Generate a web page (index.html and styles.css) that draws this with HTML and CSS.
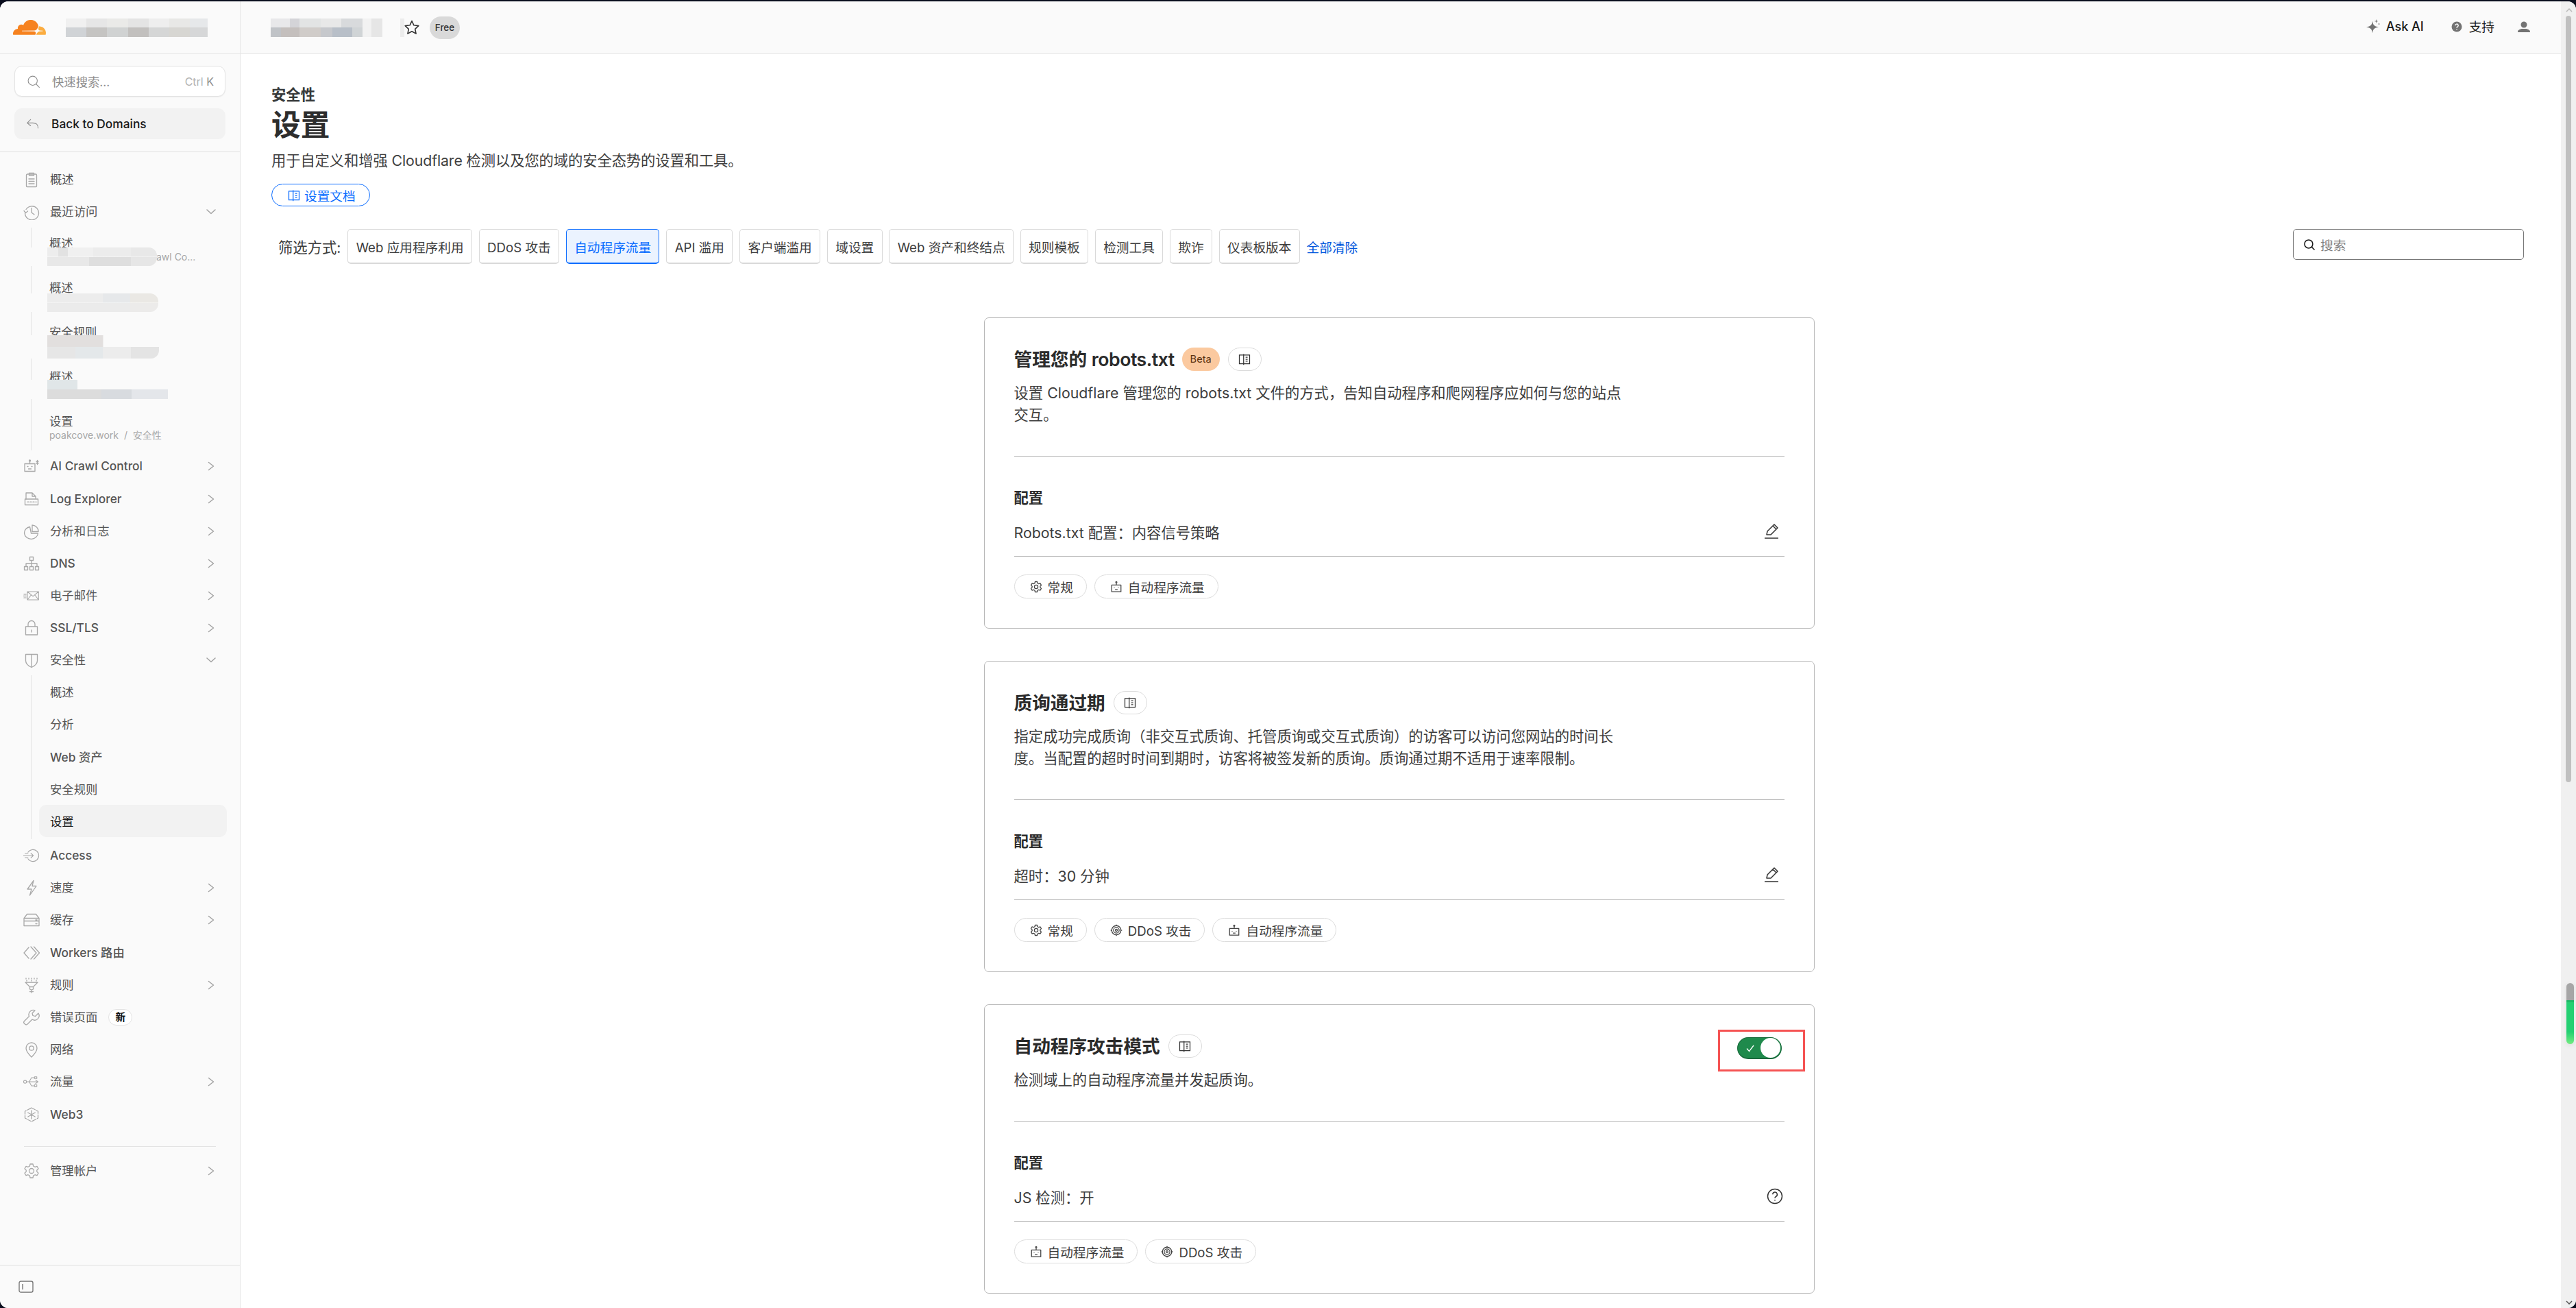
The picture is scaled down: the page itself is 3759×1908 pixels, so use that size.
FILE: index.html
```html
<!DOCTYPE html>
<html lang="zh-CN">
<head>
<meta charset="utf-8">
<title>设置</title>
<link rel="stylesheet" href="styles.css">
</head>
<body>
<svg class="defs" aria-hidden="true">
  <defs>
    <symbol id="i-clip" viewBox="0 0 24 24"><path d="M6 4h12a1.500 1.500 0 0 1 1.500 1.500v16a1 1 0 0 1-1 1h-13a1 1 0 0 1-1-1v-16A1.500 1.500 0 0 1 6 4z"/><path d="M8.500 2.500h7V6h-7zM8 11h8M8 14.500h8M8 18h8"/></symbol>
    <symbol id="i-hist" viewBox="0 0 24 24"><path d="M4 8.500A10 10 0 1 1 2.500 14"/><path d="M1 10.500l2.500 3 3-2.500M12 6.500V13l4 3"/></symbol>
    <symbol id="i-bot" viewBox="0 0 24 24"><path d="M2 8.500h15v11H2zM9.500 8.500V4.500"/><circle cx="9.500" cy="4" r="1"/><path d="M6 12.500h1M12 12.500h1M7.500 16h4M19 5l3 3M22 5l-3 3M20.500 3.500v6"/></symbol>
    <symbol id="i-log" viewBox="0 0 24 24"><path d="M4 12V3h9l5 5v3M13 3v5h5"/><path d="M2.500 12h19v8.500h-19z"/><path d="M6 16.200h2M10 16.200h2M14 16.200h2M18 16.200h1"/></symbol>
    <symbol id="i-pie" viewBox="0 0 24 24"><path d="M9.500 5.500a10 9 0 1 0 12 9.500H11.500z"/><path d="M13 3a9.500 9 0 0 1 9 9.500H13z"/></symbol>
    <symbol id="i-dns" viewBox="0 0 24 24"><path d="M9.500 2.500h5v5h-5zM1.500 16.500h5v5h-5zM9.500 16.500h5v5h-5zM17.500 16.500h5v5h-5zM12 7.500v9M4 16.500V12h16v4.500"/></symbol>
    <symbol id="i-mail" viewBox="0 0 28 24"><path d="M7 5h19v14H7zM7 5l9.500 8L26 5M7 19l6.500-8.500M26 19l-6.500-8.500M1 9.500h4M0 12.500h5M1 15.500h4"/></symbol>
    <symbol id="i-lock" viewBox="0 0 24 24"><path d="M3.500 10h17v12h-17zM7 10V6.500a5 5 0 0 1 10 0V10M12 15v3"/></symbol>
    <symbol id="i-shield" viewBox="0 0 24 24"><path d="M3.500 3.500h17v9c0 5-4 8-8.500 10-4.500-2-8.500-5-8.500-10zM12 3.500v19"/></symbol>
    <symbol id="i-access" viewBox="0 0 28 24"><path d="M8 6.500a10 10 0 1 1 0 11M0 12h17M13 8l4 4-4 4M3 8.500h5M3 15.500h5"/></symbol>
    <symbol id="i-bolt" viewBox="0 0 24 24"><path d="M15 1.500L6 14h6l-2.500 9L19 9.500h-6z"/></symbol>
    <symbol id="i-cache" viewBox="0 0 24 24"><path d="M5.500 3.500h13L23 9.500v4H1v-4zM1 9.500h22M1 14v6.500h22V14M18 12h2M18 17.500h2"/></symbol>
    <symbol id="i-work" viewBox="0 0 24 24"><path d="M8 4L1 12l7 8M11 3l8 9-8 9M15.500 3l8 9-8 9"/></symbol>
    <symbol id="i-rules" viewBox="0 0 24 24"><path d="M3 8h18l-6.500 6.500H9.500zM9.500 14.500V18l2.500 1 2.500-1v-3.500M12 19v4M9.500 21.500h5M4 2v1M8 2v1M12 2v1M16 2v1M20 2v1M5 5v1M12 5v1M19 5v1" /></symbol>
    <symbol id="i-wrench" viewBox="0 0 24 24"><path d="M22 6l-4.500 4.500L14 9.500l-1-3.500L17 2a6.500 6.500 0 0 0-8.500 8.500L1.500 17.500a2.500 2.500 0 0 0 0 3.500l1 1a2.500 2.500 0 0 0 3.500 0l7-7A6.500 6.500 0 0 0 22 6z"/></symbol>
    <symbol id="i-pin" viewBox="0 0 24 24"><path d="M12 23c-5-5-8-9-8-13a8 8 0 0 1 16 0c0 4-3 8-8 13z"/><circle cx="12" cy="10" r="3.200"/></symbol>
    <symbol id="i-usb" viewBox="0 0 28 24"><circle cx="3" cy="12" r="2.500"/><path d="M5.500 12H24M21 9l4 3-4 3M10 12l4-7h5M10 12l4 7h5"/><path d="M19 3.500h4v3h-4zM19 17h4v3h-4z"/></symbol>
    <symbol id="i-web3" viewBox="0 0 24 24"><path d="M12 2l9.500 5v10L12 22 2.500 17V7z" stroke-dasharray="6 2"/><path d="M12 6v12M6.800 9l10.400 6M17.200 9L6.800 15"/></symbol>
    <symbol id="i-gear" viewBox="0 0 24 24"><path d="M10 2h4l.7 3 2.300 1.300 3-1 2 3.500-2.200 2.100v2.200l2.200 2.100-2 3.500-3-1L14.700 19 14 22h-4l-.7-3L7 17.700l-3 1-2-3.500 2.200-2.100v-2.200L2 8.800l2-3.500 3 1L9.300 5z"/><circle cx="12" cy="12" r="3.500"/></symbol>
    <symbol id="i-book" viewBox="0 0 24 24"><path d="M3 4.500h7.500v15.500H3zM10.500 4.500H21V20H10.500M10.500 3v19M14 8.500h3.500M14 12h3.500M14 15.500h3.500"/></symbol>
    <symbol id="i-search" viewBox="0 0 24 24"><circle cx="10.500" cy="10.500" r="8"/><path d="M16.500 16.500L22 22"/></symbol>
    <symbol id="i-bottag" viewBox="0 0 24 24"><path d="M3 8.500h18v13H3zM12 8.500V4"/><circle cx="12" cy="3" r="1.200"/><path d="M8 13.500v1M16 13.500v1M9.500 17.500h5"/></symbol>
    <symbol id="i-target" viewBox="0 0 24 24"><circle cx="12" cy="12" r="9"/><circle cx="12" cy="12" r="5.500"/><circle cx="12" cy="12" r="2"/><path d="M12 1v3M12 20v3M1 12h3M20 12h3"/></symbol>
    <symbol id="i-pencil" viewBox="0 0 24 24"><path d="M5 17l1-5L16 2l5 5-10 10zM14 4l5 5M2 22h20"/></symbol>
    <symbol id="i-help" viewBox="0 0 24 24"><circle cx="12" cy="12" r="10.500"/><path d="M8.800 9.300a3.300 3.300 0 1 1 4.800 3c-1 .6-1.600 1.200-1.600 2.500M12 17v1.500"/></symbol>
    <symbol id="i-right" viewBox="0 0 14 14"><path d="M3.500 1.500L10.500 7l-7 5.500"/></symbol>
    <symbol id="i-down" viewBox="0 0 14 14"><path d="M1 4l6 5.500L13 4"/></symbol>
  </defs>
</svg>
<div class="app">
  <aside class="sidebar">
    <div class="brand">
      <svg class="logo" viewBox="0 6.700 24 10.800" aria-hidden="true">
        <path class="logo-a" d="M16.509 16.845c.147-.507.091-.971-.155-1.316-.225-.316-.605-.499-1.062-.52l-8.659-.112a.156.156 0 0 1-.133-.071c-.028-.042-.035-.099-.021-.155.028-.084.112-.148.204-.156l8.736-.112c1.035-.049 2.16-.887 2.553-1.914l.499-1.301c.022-.056.029-.113.015-.168-.562-2.546-2.835-4.445-5.55-4.445-2.504 0-4.628 1.617-5.387 3.861-.493-.366-1.119-.562-1.794-.499-1.203.119-2.167 1.083-2.286 2.286-.028.31-.007.612.064.894C1.568 13.171 0 14.775 0 16.752c0 .175.014.351.035.527.014.083.084.148.169.148h15.981c.091 0 .176-.065.203-.155z"/>
        <path class="logo-b" d="M19.266 11.281c-.077 0-.161 0-.238.011-.057 0-.106.042-.127.098l-.338 1.174c-.148.507-.092.971.154 1.317.226.316.606.498 1.063.519l1.844.113c.055 0 .105.027.132.071.029.043.035.107.022.156-.029.084-.114.148-.205.155l-1.921.112c-1.041.049-2.158.887-2.553 1.914l-.14.359c-.029.071.021.141.098.141h6.598c.077 0 .147-.049.169-.126.112-.408.176-.837.176-1.28 0-2.603-2.125-4.727-4.734-4.727"/>
      </svg>
      <div class="mosaic mosaic-brand"></div>
    </div>
    <div class="tools">
      <div class="quick">
        <svg class="ico ico-quick"><use href="#i-search"/></svg>
        <span class="quick-text">快速搜索...</span>
        <span class="kbd">Ctrl <b>K</b></span>
      </div>
      <div class="back">
        <svg class="ico ico-back" viewBox="0 0 24 24"><path d="M8 4L2 10l6 5M2 10h10c6 0 9 3 9 9"/></svg>
        <span>Back to Domains</span>
      </div>
    </div>
    <nav class="nav">
      <a class="row"><svg class="ico"><use href="#i-clip"/></svg><span>概述</span></a>
      <a class="row"><svg class="ico"><use href="#i-hist"/></svg><span>最近访问</span><svg class="chev chev-down"><use href="#i-down"/></svg></a>
      <div class="recents">
        <div class="recent"><div class="r-label">概述</div><div class="r-sub r-sub-clip">awl Co...</div><div class="mosaic mosaic-r1"></div></div>
        <div class="recent"><div class="r-label">概述</div><div class="mosaic mosaic-r2"></div></div>
        <div class="recent"><div class="r-label">安全规则</div><div class="mosaic mosaic-r3"></div></div>
        <div class="recent"><div class="r-label">概述</div><div class="mosaic mosaic-r4"></div></div>
        <div class="recent"><div class="r-label">设置</div><div class="r-sub">poakcove.work&nbsp;&nbsp;/&nbsp;&nbsp;安全性</div></div>
      </div>
      <a class="row"><svg class="ico"><use href="#i-bot"/></svg><span class="en">AI Crawl Control</span><svg class="chev"><use href="#i-right"/></svg></a>
      <a class="row"><svg class="ico"><use href="#i-log"/></svg><span class="en">Log Explorer</span><svg class="chev"><use href="#i-right"/></svg></a>
      <a class="row"><svg class="ico"><use href="#i-pie"/></svg><span>分析和日志</span><svg class="chev"><use href="#i-right"/></svg></a>
      <a class="row"><svg class="ico"><use href="#i-dns"/></svg><span class="en">DNS</span><svg class="chev"><use href="#i-right"/></svg></a>
      <a class="row"><svg class="ico"><use href="#i-mail"/></svg><span>电子邮件</span><svg class="chev"><use href="#i-right"/></svg></a>
      <a class="row"><svg class="ico"><use href="#i-lock"/></svg><span class="en">SSL/TLS</span><svg class="chev"><use href="#i-right"/></svg></a>
      <a class="row"><svg class="ico"><use href="#i-shield"/></svg><span>安全性</span><svg class="chev chev-down"><use href="#i-down"/></svg></a>
      <div class="subnav">
        <a class="sub">概述</a>
        <a class="sub">分析</a>
        <a class="sub en">Web 资产</a>
        <a class="sub">安全规则</a>
        <a class="sub sub-on">设置</a>
      </div>
      <a class="row"><svg class="ico"><use href="#i-access"/></svg><span class="en">Access</span></a>
      <a class="row"><svg class="ico"><use href="#i-bolt"/></svg><span>速度</span><svg class="chev"><use href="#i-right"/></svg></a>
      <a class="row"><svg class="ico"><use href="#i-cache"/></svg><span>缓存</span><svg class="chev"><use href="#i-right"/></svg></a>
      <a class="row"><svg class="ico"><use href="#i-work"/></svg><span class="en">Workers 路由</span></a>
      <a class="row"><svg class="ico"><use href="#i-rules"/></svg><span>规则</span><svg class="chev"><use href="#i-right"/></svg></a>
      <a class="row"><svg class="ico"><use href="#i-wrench"/></svg><span>错误页面</span><em class="new">新</em></a>
      <a class="row"><svg class="ico"><use href="#i-pin"/></svg><span>网络</span></a>
      <a class="row"><svg class="ico"><use href="#i-usb"/></svg><span>流量</span><svg class="chev"><use href="#i-right"/></svg></a>
      <a class="row"><svg class="ico"><use href="#i-web3"/></svg><span class="en">Web3</span></a>
      <div class="nav-rule"></div>
      <a class="row"><svg class="ico"><use href="#i-gear"/></svg><span>管理帐户</span><svg class="chev"><use href="#i-right"/></svg></a>
    </nav>
    <div class="side-foot">
      <svg class="panel" viewBox="0 0 22 18"><rect x="1" y="1" width="20" height="16" rx="2.500"/><path d="M6 5v8"/></svg>
    </div>
  </aside>

  <main class="main">
    <header class="topbar">
      <div class="mosaic mosaic-top"></div>
      <svg class="star" viewBox="0 0 24 24"><path d="M12 2.500l2.900 6.300 6.900.8-5.100 4.700 1.400 6.800-6.100-3.400-6.100 3.400 1.400-6.800L2.200 9.600l6.900-.8z"/></svg>
      <span class="free">Free</span>
      <div class="top-right">
        <span class="top-item"><svg class="top-ico" viewBox="0 0 20 21"><path d="M9 2.500c.8 6 2.500 7.700 9 9-6.500 1.300-8.200 3-9 9-.8-6-2.500-7.700-9-9 6.500-1.300 8.200-3 9-9z"/><path d="M14.500 0l.6 2.400 2.400.6-2.400.6-.6 2.400-.6-2.400-2.400-.6 2.400-.6zM18.500 5.500l.4 1.100 1.100.4-1.100.4-.4 1.100-.4-1.100-1.100-.4 1.100-.4z"/></svg><b>Ask AI</b></span>
        <span class="top-item top-help"><svg class="top-ico-s" viewBox="0 0 16 16"><circle cx="8" cy="8" r="7.500"/><path class="qm" d="M5.800 6.300a2.200 2.200 0 1 1 3.300 1.900c-.7.400-1.100.8-1.100 1.600M8 11.200v1.200"/></svg><span class="help-text">支持</span></span>
        <svg class="user" viewBox="0 0 18 16"><circle cx="9" cy="5" r="4.500"/><path d="M0 16c0-3 2-4 5.500-5h7c3.500 1 5.500 2 5.500 5z"/></svg>
      </div>
    </header>
    <div class="content">
      <div class="eyebrow">安全性</div>
      <h1 class="title">设置</h1>
      <p class="lead">用于自定义和增强 Cloudflare 检测以及您的域的安全态势的设置和工具。</p>
      <a class="doc"><svg class="doc-ico"><use href="#i-book"/></svg>设置文档</a>
      <div class="filters">
        <span class="f-label">筛选方式:</span>
        <button class="f-btn">Web 应用程序利用</button>
        <button class="f-btn">DDoS 攻击</button>
        <button class="f-btn f-on">自动程序流量</button>
        <button class="f-btn">API 滥用</button>
        <button class="f-btn">客户端滥用</button>
        <button class="f-btn">域设置</button>
        <button class="f-btn">Web 资产和终结点</button>
        <button class="f-btn">规则模板</button>
        <button class="f-btn">检测工具</button>
        <button class="f-btn">欺诈</button>
        <button class="f-btn">仪表板版本</button>
        <a class="f-clear">全部清除</a>
        <div class="f-search"><svg class="f-search-ico"><use href="#i-search"/></svg><span>搜索</span></div>
      </div>
      <div class="cards">
        <section class="card">
          <div class="card-head"><h2>管理您的 <span class="h2-en">robots.txt</span></h2><span class="beta">Beta</span><span class="book"><svg><use href="#i-book"/></svg></span></div>
          <p class="card-desc">设置 Cloudflare 管理您的 robots.txt 文件的方式，告知自动程序和爬网程序应如何与您的站点交互。</p>
          <hr class="rule rule-top">
          <h3>配置</h3>
          <div class="cfg"><span>Robots.txt 配置：内容信号策略</span><svg class="cfg-ico"><use href="#i-pencil"/></svg></div>
          <hr class="rule">
          <div class="tags">
            <span class="tag"><svg><use href="#i-gear"/></svg>常规</span>
            <span class="tag"><svg><use href="#i-bottag"/></svg>自动程序流量</span>
          </div>
        </section>
        <section class="card">
          <div class="card-head"><h2>质询通过期</h2><span class="book"><svg><use href="#i-book"/></svg></span></div>
          <p class="card-desc">指定成功完成质询（非交互式质询、托管质询或交互式质询）的访客可以访问您网站的时间长度。当配置的超时时间到期时，访客将被签发新的质询。质询通过期不适用于速率限制。</p>
          <hr class="rule rule-top">
          <h3>配置</h3>
          <div class="cfg"><span>超时：30 分钟</span><svg class="cfg-ico"><use href="#i-pencil"/></svg></div>
          <hr class="rule">
          <div class="tags">
            <span class="tag"><svg><use href="#i-gear"/></svg>常规</span>
            <span class="tag"><svg><use href="#i-target"/></svg>DDoS 攻击</span>
            <span class="tag"><svg><use href="#i-bottag"/></svg>自动程序流量</span>
          </div>
        </section>
        <section class="card">
          <div class="card-head"><h2>自动程序攻击模式</h2><span class="book"><svg><use href="#i-book"/></svg></span>
            <div class="switch-wrap"><div class="switch"><svg viewBox="0 0 14 14"><path d="M2 7.500l3.500 4L12 3"/></svg><i></i></div></div>
          </div>
          <p class="card-desc">检测域上的自动程序流量并发起质询。</p>
          <hr class="rule rule-top">
          <h3>配置</h3>
          <div class="cfg"><span>JS 检测：开</span><svg class="cfg-ico cfg-ico-help"><use href="#i-help"/></svg></div>
          <hr class="rule">
          <div class="tags">
            <span class="tag"><svg><use href="#i-bottag"/></svg>自动程序流量</span>
            <span class="tag"><svg><use href="#i-target"/></svg>DDoS 攻击</span>
          </div>
        </section>
      </div>
    </div>
  </main>

  <div class="scrollbar">
    <svg class="sb-arrow" viewBox="0 0 10 6"><path d="M1 5l4-4 4 4"/></svg>
    <div class="sb-thumb"></div>
    <div class="sb-blob"></div>
    <svg class="sb-arrow sb-arrow-down" viewBox="0 0 10 6"><path d="M1 1l4 4 4-4"/></svg>
  </div>
</div>
</body>
</html>
```

FILE: styles.css
```css
* { box-sizing: border-box; }
html, body { margin: 0; height: 100%; }
body {
  background: #0a0e1e;
  font-family: Inter, "Noto Sans CJK SC", sans-serif;
  color: #333;
  overflow: hidden;
}
.defs { position: absolute; width: 0; height: 0; }
.app {
  display: flex;
  height: 1906px;
  margin-top: 2px;
  background: #fff;
  border-radius: 12px;
  overflow: hidden;
}

/* sidebar */
.sidebar {
  width: 351px;
  flex: none;
  display: flex;
  flex-direction: column;
  background: #fafafa;
  border-right: 1px solid #e5e5e5;
}
.brand {
  height: 77px;
  flex: none;
  display: flex;
  align-items: center;
  gap: 29px;
  padding-left: 19px;
  border-bottom: 1px solid #e5e5e5;
}
.logo { width: 48px; height: 22px; }
.logo-a { fill: #f6821f; }
.logo-b { fill: #fbad41; }
.tools {
  flex: none;
  display: flex;
  flex-direction: column;
  gap: 17px;
  padding: 17px 21px 18px;
  border-bottom: 1px solid #e0e0e0;
}
.ico {
  width: 24px;
  height: 24px;
  flex: none;
  fill: none;
  stroke: #a8a8a8;
  stroke-width: 1.300;
  stroke-linejoin: round;
  stroke-linecap: round;
}
.quick, .back {
  height: 45px;
  display: flex;
  align-items: center;
  padding: 0 16px;
  border-radius: 11px;
  font-size: 17.330px;
}
.quick { background: #fff; border: 1px solid #e3e3e3; color: #8c8c8c; box-shadow: 0 1px 1px #eee; }
.ico-quick { width: 20px; height: 20px; margin: 0 17px 0 1px; stroke: #8f8f8f; }
.quick-text { flex: 1; }
.kbd { font-size: 16px; color: #b3b3b3; }
.kbd b { font-weight: 400; color: #8c8c8c; }
.back { background: #f2f2f2; color: #1a1a1a; font-weight: 500; }
.ico-back { width: 20px; height: 20px; margin: 0 17px 0 1px; stroke: #8f8f8f; }
.nav { flex: none; padding-top: 16px; font-size: 17.330px; color: #555; }
.row {
  height: 47.200px;
  display: flex;
  align-items: center;
  padding: 0 35px 0 34px;
  line-height: 24px;
}
.row .ico { margin-right: 15px; }
.en { font-weight: 500; }
.chev {
  width: 14px;
  height: 14px;
  margin-left: auto;
  fill: none;
  stroke: #a3a3a3;
  stroke-width: 1.500;
  stroke-linecap: round;
  stroke-linejoin: round;
}
.new {
  margin-left: 16px;
  width: 35px;
  height: 24px;
  line-height: 22px;
  text-align: center;
  border: 1px solid #e3e3e3;
  border-radius: 12px;
  background: #fff;
  font-size: 14.670px;
  font-style: normal;
  font-weight: 700;
  color: #111;
}
.recents, .subnav {
  margin-left: 45px;
  border-left: 1px solid #e3e3e3;
}
.recents { height: 324.400px; }
.recent { position: relative; height: 64.880px; padding: 11px 0 0 26px; }
.r-label { line-height: 23px; }
.r-sub { font-size: 14px; line-height: 20px; color: #a6a6a6; margin-top: -1px; }
.r-sub-clip { padding-left: 156px; }

.mosaic { position: relative; flex: none; background-repeat: no-repeat; }
.mosaic-brand {
  width: 216px;
  height: 27px;
  background-size: 100% 13px, 100% 14px;
  background-position: top, bottom;
  background-image:
    linear-gradient(90deg, #f0f0f0 0 14%, #e6e6e6 0 28%, #eaeae8 0 42%, #e4e4e4 0 56%, #eeeeee 0 70%, #e8e8e6 0 84%, #e6e8ea 0 96%, #fafafa 0),
    linear-gradient(90deg, #d0d3d6 0 14%, #c5c4c2 0 28%, #d0d2d2 0 42%, #c2c0be 0 56%, #d5d6d6 0 70%, #d7d6d2 0 84%, #d6d7d8 0 96%, #fafafa 0);
}
.mosaic-top {
  width: 163px;
  height: 27px;
  background-size: 100% 13px, 100% 14px;
  background-position: top, bottom;
  background-image:
    linear-gradient(90deg, #e8e8ea 0 17%, #d4d4d8 0 26%, #e2e4e4 0 45%, #e8e8e8 0 63%, #d8dadc 0 82%, #f2f2f2 0 90%, #e6e6e6 0),
    linear-gradient(90deg, #c0c3c7 0 9%, #c4bfbd 0 26%, #d0ccc9 0 45%, #c6c8cc 0 55%, #b8bfc8 0 73%, #d0d4d6 0 82%, #f2f2f2 0 90%, #e6e6e6 0);
}
.mosaic-top::after {
  content: "";
  position: absolute;
  left: 189px;
  top: 0;
  width: 6px;
  height: 27px;
  background: #ececec;
}
.mosaic-r1, .mosaic-r2, .mosaic-r3, .mosaic-r4 {
  position: absolute;
  left: 23px;
  background-size: 100% 50%, 100% 50%;
  background-position: top, bottom;
}
.mosaic-r1::before, .mosaic-r2::before, .mosaic-r3::before, .mosaic-r4::before {
  content: "";
  position: absolute;
  left: -25px;
  width: 25px;
  top: 0;
  bottom: 0;
  background: #fafafa;
}
.mosaic-r1 {
  top: 29px;
  width: 160px;
  height: 27px;
  border-radius: 0 12px 12px 0;
  background-image:
    linear-gradient(90deg, #ededed 0 10%, #e2e2e2 0 19%, #f0f0f0 0 42%, #ececec 0 76%, #e8e8e8 0),
    linear-gradient(90deg, #e8e8e8 0 38%, #dedede 0 76%, #e6e6e6 0);
}
.mosaic-r2 {
  top: 31px;
  width: 162px;
  height: 27px;
  border-radius: 0 12px 12px 0;
  background-image:
    linear-gradient(90deg, #ececec 0 50%, #e6e8ea 0 75%, #eae8e4 0),
    linear-gradient(90deg, #ebebeb 0 75%, #ecebea 0);
}
.mosaic-r3 {
  top: 27px;
  width: 163px;
  height: 34px;
  border-radius: 0 12px 12px 0;
  background-image:
    linear-gradient(90deg, #e2dfde 0 50%, #f4f4f4 0 51%, #fafafa 0),
    linear-gradient(90deg, #e6e6e6 0 25%, #e4e8ea 0 50%, #ececec 0 75%, #e4e4e4 0);
}
.mosaic-r4 {
  top: 27px;
  width: 176px;
  height: 28px;
  background-image:
    linear-gradient(90deg, #e0e6e8 0 25%, #fafafa 0),
    linear-gradient(90deg, #dcdcdc 0 45%, #d8dbdf 0 70%, #e4e6ea 0);
}
.subnav { height: 239.400px; margin-top: -2px; }
.sub {
  display: flex;
  align-items: center;
  height: 47.200px;
  margin-left: 11px;
  width: 274px;
  padding-left: 16px;
  border-radius: 11px;
}
.sub-on { background: #f2f2f2; color: #1a1a1a; }
.nav-rule { height: 1px; margin: 23px 35px 11px; background: #e3e3e3; }
.side-foot {
  margin-top: auto;
  height: 63px;
  flex: none;
  display: flex;
  align-items: center;
  padding-left: 27px;
  border-top: 1px solid #e0e0e0;
}
.panel { width: 22px; height: 18px; fill: none; stroke: #777; stroke-width: 1.400; }

/* main */
.main { flex: 1; min-width: 0; display: flex; flex-direction: column; }
.topbar {
  height: 77px;
  flex: none;
  display: flex;
  align-items: center;
  padding: 0 45px 0 44px;
  background: #fafafa;
  border-bottom: 1px solid #e5e5e5;
}
.star {
  width: 24px;
  height: 24px;
  margin-left: 31px;
  fill: none;
  stroke: #333;
  stroke-width: 1.600;
  stroke-linejoin: round;
}
.free {
  margin-left: 14px;
  width: 44px;
  height: 33px;
  line-height: 33px;
  border-radius: 17px;
  background: #d9d9d9;
  text-align: center;
  font-size: 13.500px;
  font-weight: 500;
  color: #333;
}
.top-right { margin-left: auto; display: flex; align-items: center; padding-bottom: 3px; font-size: 18.670px; color: #1a1a1a; }
.top-item { display: flex; align-items: center; }
.top-item b { font-weight: 500; font-size: 18px; }
.top-ico { width: 20px; height: 21px; margin-right: 9px; fill: #737373; }
.top-help { margin-left: 40px; }
.help-text { margin-top: -3px; }
.top-ico-s { width: 16px; height: 16px; margin-right: 10px; fill: #737373; }
.qm { fill: none; stroke: #fafafa; stroke-width: 1.500; }
.user { width: 18px; height: 16px; margin-left: 34px; fill: #737373; }

.content { padding: 44px 54px 0 45px; }
.eyebrow { font-size: 21.330px; font-weight: 700; line-height: 30px; color: #36393a; }
.title { margin: 3px 0 0; font-size: 42.670px; font-weight: 700; line-height: 53px; color: #2d2d2d; }
.lead { margin: 9px 0 0; font-size: 21.330px; line-height: 32px; letter-spacing: -0.120px; color: #404040; }
.doc {
  display: inline-flex;
  align-items: center;
  height: 33px;
  margin-top: 18px;
  padding: 0 20px 0 22px;
  border: 1px solid #0a6cff;
  border-radius: 17px;
  font-size: 18.670px;
  color: #0a6cff;
}
.doc-ico { width: 20px; height: 20px; margin-right: 5px; fill: none; stroke: #0a6cff; stroke-width: 1.500; }
.filters { display: flex; align-items: center; gap: 9.900px; margin-top: 33px; padding-left: 10px; }
.f-label { font-size: 21.330px; color: #3a3a3a; }
.f-btn {
  height: 51px;
  padding: 0 11.300px;
  border: 1px solid #d9d9d9;
  border-bottom-width: 2px;
  border-radius: 5px;
  background: #fff;
  font-family: inherit;
  font-size: 18.670px;
  color: #3d3d3d;
}
.f-on { background: #ebf3ff; border-color: #0a6cff; color: #0a6cff; }
.f-clear { font-size: 18.670px; color: #0055dc; }
.f-search {
  align-self: flex-start;
  margin-left: auto;
  width: 337px;
  height: 45px;
  display: flex;
  align-items: center;
  padding-left: 14px;
  border: 1px solid #777;
  border-radius: 5px;
  font-size: 18.670px;
  color: #808080;
}
.f-search-ico { width: 18px; height: 18px; margin-right: 7px; fill: none; stroke: #1a1a1a; stroke-width: 2; }

.cards { display: flex; flex-direction: column; align-items: center; gap: 47px; margin-top: 78px; padding-left: 4px; }
.card {
  width: 1212px;
  padding: 43px;
  border: 1px solid #b8b8b8;
  border-radius: 7px;
  background: #fff;
}
.card-head { display: flex; align-items: center; gap: 12px; height: 34px; }
.card-head h2 { margin: 0; font-size: 26.670px; font-weight: 600; color: #2b2b2b; line-height: 34px; }
.h2-en { letter-spacing: -0.500px; }
.beta {
  width: 55px;
  height: 34px;
  line-height: 34px;
  margin-left: -1px;
  border-radius: 17px;
  background: #fbc99f;
  text-align: center;
  font-size: 14.670px;
  color: #5c3310;
}
.book {
  width: 49px;
  height: 34px;
  display: flex;
  align-items: center;
  justify-content: center;
  border: 1px solid #dcdcdc;
  border-radius: 17px;
}
.book svg { width: 20px; height: 20px; fill: none; stroke: #333; stroke-width: 1.500; }
.card-desc { margin: 16px 0 0; max-width: 895px; font-size: 21.330px; line-height: 32px; color: #3d3d3d; }
.rule { height: 1px; margin: 0; border: 0; background: #b8b8b8; }
.rule-top { margin-top: 44px; }
.card h3 { margin: 44px 0 0; font-size: 21.330px; font-weight: 700; line-height: 32px; color: #2b2b2b; }
.cfg {
  display: flex;
  align-items: center;
  justify-content: space-between;
  height: 32px;
  margin: 17px 0 20px;
  font-size: 21.330px;
  color: #3d3d3d;
}
.cfg-ico { width: 24px; height: 24px; margin-right: 7px; fill: none; stroke: #333; stroke-width: 1.500; stroke-linejoin: round; }
.cfg-ico-help { margin-right: 2px; }
.tags { display: flex; gap: 11px; margin-top: 26px; }
.tag {
  display: flex;
  align-items: center;
  height: 35px;
  padding: 0 19px 0 22px;
  border: 1px solid #dcdcdc;
  border-radius: 18px;
  font-size: 18.670px;
  color: #3d3d3d;
}
.tag svg { width: 18px; height: 18px; margin-right: 8px; fill: none; stroke: #444; stroke-width: 1.700; stroke-linejoin: round; }

.switch-wrap { position: relative; margin: 6px 4px 0 auto; }
.switch-wrap::after {
  content: "";
  position: absolute;
  left: -28px;
  right: -34px;
  top: -11px;
  bottom: -18px;
  border: 3px solid #f55353;
  pointer-events: none;
}
.switch {
  position: relative;
  width: 65px;
  height: 32px;
  border-radius: 16px;
  background: #1f8a4c;
  border: 1px solid #17693a;
  border-bottom-width: 2px;
}
.switch svg { position: absolute; left: 11px; top: 8px; width: 14px; height: 14px; fill: none; stroke: #fff; stroke-width: 1.300; }
.switch i { position: absolute; right: 1px; top: 0; width: 29px; height: 29px; border-radius: 50%; background: #fff; }

/* scrollbar */
.scrollbar { position: relative; width: 22px; flex: none; background: #f0f0f0; }
.sb-arrow {
  position: absolute;
  left: 7px;
  top: 10px;
  width: 10px;
  height: 6px;
  fill: none;
  stroke: #bbb;
  stroke-width: 1.500;
}
.sb-arrow-down { top: auto; bottom: 5px; stroke: #555; }
.sb-thumb { width: 8px; height: 1118px; margin: 21px 0 0 7px; border-radius: 4px; background: #c0c0c0; }
.sb-blob {
  position: absolute;
  left: 8px;
  top: 1432px;
  width: 11px;
  height: 89px;
  border-radius: 6px;
  background: linear-gradient(#a6a6a6 0 28%, #1fb767 28% 31%, #24d072 31% 80%, #74ec82 100%);
  box-shadow: 0 2px 6px #ddd;
}
```
